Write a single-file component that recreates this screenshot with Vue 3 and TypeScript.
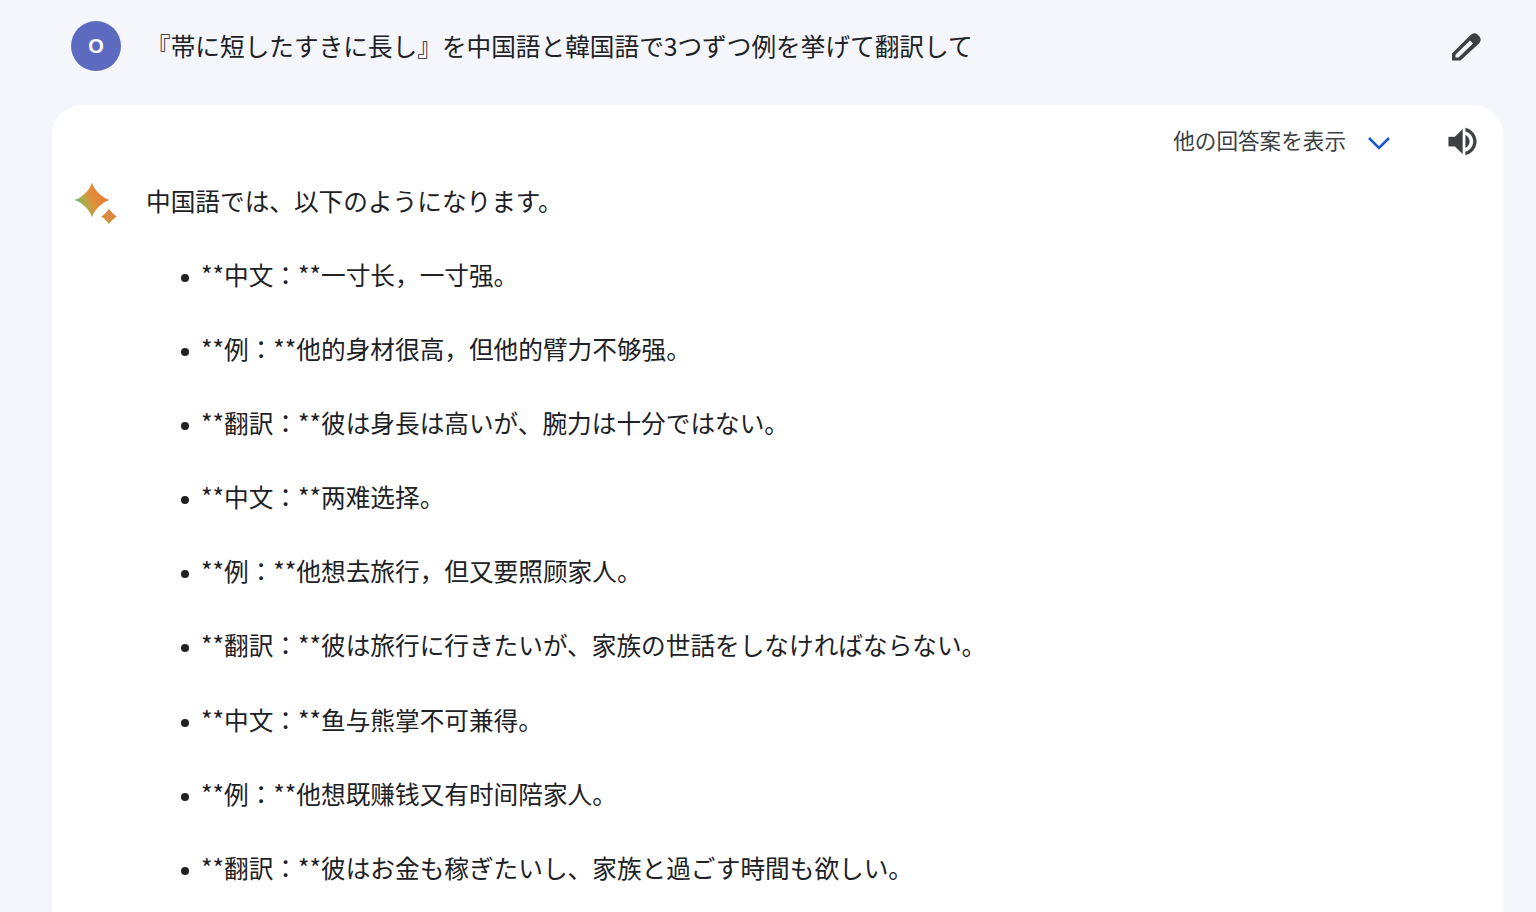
<script setup lang="ts">
const lines = [
  '**中文：**一寸长，一寸强。',
  '**例：**他的身材很高，但他的臂力不够强。',
  '**翻訳：**彼は身長は高いが、腕力は十分ではない。',
  '**中文：**两难选择。',
  '**例：**他想去旅行，但又要照顾家人。',
  '**翻訳：**彼は旅行に行きたいが、家族の世話をしなければならない。',
  '**中文：**鱼与熊掌不可兼得。',
  '**例：**他想既赚钱又有时间陪家人。',
  '**翻訳：**彼はお金も稼ぎたいし、家族と過ごす時間も欲しい。',
]
</script>

<template>
  <div class="page">
    <header class="prompt">
      <div class="prompt__avatar">O</div>
      <p class="prompt__text">『帯に短したすきに長し』を中国語と韓国語で3つずつ例を挙げて翻訳して</p>
      <svg class="prompt__edit" viewBox="0 0 42 42">
        <path fill-rule="evenodd" d="M7 34.500V27.500L25.500 9Q29 5.800 32.500 8.500L34.500 10.500Q37 14 34 17.500L15.500 34.500ZM10.500 28.800L25 14.500 28 17.500 13.500 31.500H10.500Z" />
      </svg>
    </header>

    <section class="card">
      <div class="card__actions">
        <span class="card__drafts">他の回答案を表示</span>
        <svg class="card__chevron" viewBox="0 0 24 16">
          <path d="M2 3l10 10L22 3" />
        </svg>
        <svg class="card__speaker" viewBox="0 0 24 24">
          <path d="M3 9v6h4l5 5V4L7 9H3zm13.500 3c0-1.770-1.020-3.290-2.500-4.030v8.050c1.480-.730 2.500-2.250 2.500-4.020zM14 3.230v2.060c2.890.860 5 3.540 5 6.710s-2.110 5.850-5 6.710v2.060c4.010-.910 7-4.490 7-8.770s-2.990-7.860-7-8.770z" />
        </svg>
      </div>

      <div class="answer">
        <svg class="answer__spark" viewBox="0 0 46 46">
          <defs>
            <linearGradient id="spark" gradientUnits="userSpaceOnUse" x1="1" y1="24" x2="30" y2="12">
              <stop offset="0" stop-color="#4fa6a8" />
              <stop offset="0.25" stop-color="#a3b152" />
              <stop offset="0.6" stop-color="#e08f38" />
              <stop offset="1" stop-color="#e67c38" />
            </linearGradient>
            <linearGradient id="spark-small" x1="0" y1="1" x2="1" y2="0">
              <stop offset="0" stop-color="#d0a040" />
              <stop offset="1" stop-color="#e8743c" />
            </linearGradient>
          </defs>
          <path fill="url(#spark)" d="M18 .5C19.800 7.500 28.500 16.200 35.500 18 28.500 19.800 19.800 28.500 18 35.500 16.200 28.500 7.500 19.800 .5 18 7.500 16.200 16.200 7.500 18 .5Z" />
          <path fill="url(#spark-small)" d="M35 26.500C35.800 28.700 40.800 33.700 43 34.500 40.800 35.300 35.800 40.300 35 42.500 34.200 40.300 29.200 35.300 27 34.500 29.200 33.700 34.200 28.700 35 26.500Z" />
        </svg>
        <div class="answer__body">
          <p class="answer__lead">中国語では、以下のようになります。</p>
          <ul class="answer__list">
            <li v-for="line in lines" :key="line" class="answer__item">{{ line }}</li>
          </ul>
        </div>
      </div>
    </section>
  </div>
</template>

<style>
html,
body {
  margin: 0;
  background: #f4f6fc;
}
</style>

<style scoped>
.page {
  height: 912px;
  overflow: hidden;
  background: #f4f6fc;
  color: #202124;
  font-family: "Noto Sans CJK JP", "Liberation Sans", sans-serif;
  font-size: 24.66px;
}

.prompt {
  display: flex;
  align-items: center;
  height: 105px;
  box-sizing: border-box;
  padding: 0 49px 13px 71px;
}

.prompt__avatar {
  display: flex;
  align-items: center;
  justify-content: center;
  width: 50px;
  height: 50px;
  flex-shrink: 0;
  border-radius: 50%;
  background: #5c6bc0;
  color: #fff;
  font-family: "Liberation Sans", sans-serif;
  font-size: 20px;
  font-weight: 700;
}

.prompt__text {
  flex: 1;
  margin: 0 0 2px 25px;
  line-height: 36px;
}

.prompt__edit {
  width: 42px;
  height: 42px;
  margin-top: 2px;
  fill: #3c4043;
}

.card {
  margin: 0 33px 0 52px;
  height: 900px;
  border-radius: 30px;
  background: #fff;
}

.card__actions {
  display: flex;
  align-items: center;
  justify-content: flex-end;
  height: 74px;
  padding: 0 22px 0 0;
}

.card__drafts {
  padding-bottom: 6px;
  font-size: 21.6px;
  color: #3c4043;
}

.card__chevron {
  width: 24px;
  height: 16px;
  margin: 2px 0 0 21px;
  fill: none;
  stroke: #1a56d6;
  stroke-width: 2.6;
}

.card__speaker {
  width: 37px;
  height: 37px;
  margin: 0 0 2px 53px;
  fill: #3c4043;
  stroke: #3c4043;
  stroke-width: 0.2;
}

.answer {
  display: flex;
  padding: 0 0 0 22px;
}

.answer__spark {
  width: 46px;
  height: 46px;
  margin-top: 3px;
  flex-shrink: 0;
}

.answer__body {
  margin-left: 26px;
}

.answer__lead {
  margin: 0;
  line-height: 36px;
  padding-top: 3px;
}

.answer__list {
  margin: 38px 0 0;
  padding: 0 0 0 35px;
  list-style: none;
  line-height: 36px;
}

.answer__item {
  display: flex;
  align-items: center;
}

.answer__item::before {
  content: "";
  width: 8px;
  height: 8px;
  margin: 8px 12px 0 0;
  flex-shrink: 0;
  border-radius: 50%;
  background: #202124;
}

.answer__item + .answer__item {
  margin-top: 38.1px;
}
</style>
